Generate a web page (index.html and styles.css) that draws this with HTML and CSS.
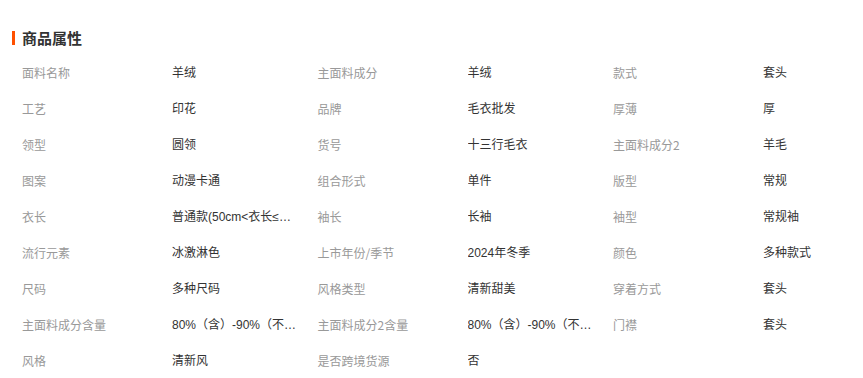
FILE: index.html
```html
<!DOCTYPE html>
<html lang="zh">
<head>
<meta charset="utf-8">
<link rel="stylesheet" href="styles.css">
</head>
<body>
<section class="attrs">
  <h2 class="title">商品属性</h2>
  <div class="grid">
    <div class="k">面料名称</div><div class="v">羊绒</div>
    <div class="k">主面料成分</div><div class="v">羊绒</div>
    <div class="k">款式</div><div class="v">套头</div>

    <div class="k">工艺</div><div class="v">印花</div>
    <div class="k">品牌</div><div class="v">毛衣批发</div>
    <div class="k">厚薄</div><div class="v">厚</div>

    <div class="k">领型</div><div class="v">圆领</div>
    <div class="k">货号</div><div class="v">十三行毛衣</div>
    <div class="k">主面料成分2</div><div class="v">羊毛</div>

    <div class="k">图案</div><div class="v">动漫卡通</div>
    <div class="k">组合形式</div><div class="v">单件</div>
    <div class="k">版型</div><div class="v">常规</div>

    <div class="k">衣长</div><div class="v">普通款(50cm&lt;衣长≤65cm)</div>
    <div class="k">袖长</div><div class="v">长袖</div>
    <div class="k">袖型</div><div class="v">常规袖</div>

    <div class="k">流行元素</div><div class="v">冰激淋色</div>
    <div class="k">上市年份/季节</div><div class="v">2024年冬季</div>
    <div class="k">颜色</div><div class="v">多种款式</div>

    <div class="k">尺码</div><div class="v">多种尺码</div>
    <div class="k">风格类型</div><div class="v">清新甜美</div>
    <div class="k">穿着方式</div><div class="v">套头</div>

    <div class="k">主面料成分含量</div><div class="v">80%（含）-90%（不含）</div>
    <div class="k">主面料成分2含量</div><div class="v">80%（含）-90%（不含）</div>
    <div class="k">门襟</div><div class="v">套头</div>

    <div class="k">风格</div><div class="v">清新风</div>
    <div class="k">是否跨境货源</div><div class="v">否</div>
  </div>
</section>
</body>
</html>
```

FILE: styles.css
```css
html, body {
  margin: 0;
  padding: 0;
  background: #fff;
}
body {
  font-family: "Noto Sans CJK SC", "Microsoft YaHei", sans-serif;
  font-size: 12px;
  color: #333;
}
.attrs {
  padding: 28px 0 0 12px;
}
.title {
  margin: 0;
  display: flex;
  align-items: center;
  gap: 7px;
  font-size: 15px;
  line-height: 20px;
  font-weight: bold;
  color: #333;
}
.title::before {
  content: "";
  display: block;
  width: 3px;
  height: 14px;
  background: #ff5000;
}
.grid {
  margin-top: 7px;
  padding-left: 10px;
  display: grid;
  grid-template-columns: 150px 145.5px 150px 145.5px 150px 1fr;
  grid-auto-rows: 36px;
  line-height: 36px;
}
.k {
  color: #999;
  white-space: nowrap;
}
.v {
  font-family: "Liberation Sans", "Noto Sans CJK SC", sans-serif;
  color: #333;
  padding-right: 20.5px;
  white-space: nowrap;
  overflow: hidden;
  text-overflow: ellipsis;
}
```
